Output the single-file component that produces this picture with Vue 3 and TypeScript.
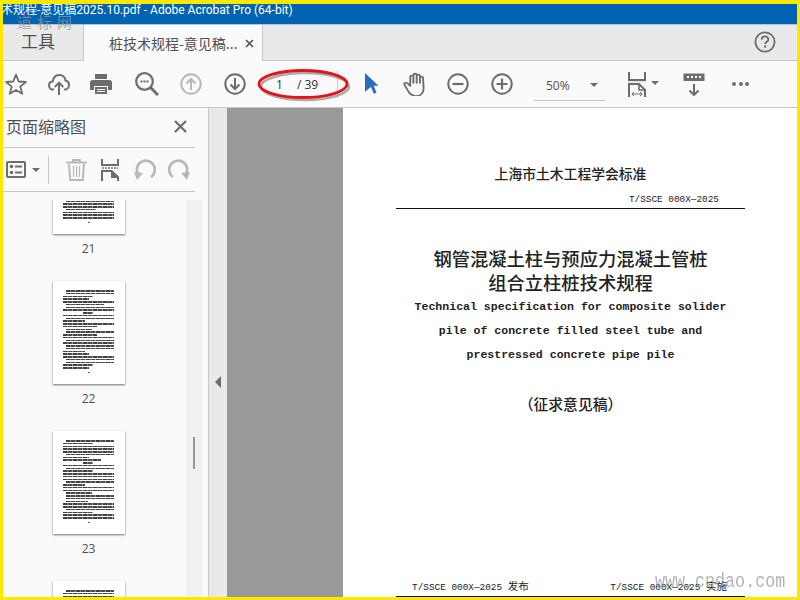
<script setup lang="ts">
interface Line { indent: number; width: number }

function makeLines(seed: number): Line[] {
  const out: Line[] = []
  let s = seed
  for (let i = 0; i < 29; i++) {
    s = (s * 37 + 11) % 101
    const indent = i % 5 === 0 ? 3 : i % 7 === 2 ? 0 : s % 3 === 0 ? 3 : 0
    const width = i === 8 ? 10 : s % 4 === 0 ? 22 + (s % 20) : 51 - indent
    out.push({ indent: i === 8 ? 20 : indent, width })
  }
  return out
}

const thumbs = [
  { n: 21, lines: makeLines(7) },
  { n: 22, lines: makeLines(23) },
  { n: 23, lines: makeLines(41) },
  { n: 24, lines: makeLines(59) },
]
</script>

<template>
  <div class="frame">
    <div class="titlebar"><span class="title-text">术规程-意见稿2025.10.pdf - Adobe Acrobat Pro (64-bit)</span></div>

    <div class="tabbar">
      <div class="tab-tools">工具</div>
      <div class="tab-doc">
        <span class="tab-name">桩技术规程-意见稿...</span>
        <svg class="tab-close" width="9" height="9" viewBox="0 0 9 9"><path d="M1 1l7 7M8 1L1 8" stroke="#555" stroke-width="1.7" /></svg>
      </div>
      <svg class="help" width="22" height="22" viewBox="0 0 22 22">
        <circle cx="11" cy="11" r="9.6" fill="none" stroke="#6d6d6d" stroke-width="1.8" />
        <path d="M7.8 8.6c0-4.2 6.6-4.2 6.6-.2 0 2.4-3.2 2.4-3.2 4.6" fill="none" stroke="#6d6d6d" stroke-width="1.9" />
        <rect x="10.1" y="14.4" width="2.2" height="2.2" fill="#6d6d6d" />
      </svg>
    </div>

    <div class="toolbar">
      <svg class="t-star" width="22" height="23" viewBox="0 0 22 23"><path d="M11 1.6l2.7 6.9 7.2.5-5.6 4.6 1.9 7.2L11 17l-6.2 3.8 1.9-7.2L1.1 9l7.2-.5z" fill="none" stroke="#6d6d6d" stroke-width="1.8" stroke-linejoin="round" /></svg>
      <svg class="t-cloud" width="22" height="23" viewBox="0 0 22 23">
        <path d="M6 16.5H5C2.600 16.500 1 14.600 1 12.400c0-2.200 1.600-3.900 3.700-4C5.400 4.600 8 2 11.300 2c3.200 0 5.800 2.300 6.200 5.400 2 .4 3.500 2.300 3.500 4.500 0 2.600-2 4.600-4.500 4.600H16" fill="none" stroke="#6d6d6d" stroke-width="2" />
        <path d="M11 22V10M6.800 14l4.200-4.400 4.200 4.400" fill="none" stroke="#6d6d6d" stroke-width="2" />
      </svg>
      <svg class="t-print" width="22" height="22" viewBox="0 0 22 22">
        <path d="M5 1h12v5H5z" fill="#6d6d6d" />
        <path d="M2.500 7h17C20.900 7 22 8.100 22 9.500V17h-4v-4H4v4H0V9.500C0 8.100 1.100 7 2.500 7z" fill="#6d6d6d" />
        <path d="M5 14h12v7H5z" fill="#6d6d6d" />
        <path d="M7 16h8v1H7zM7 18h8v1H7z" fill="#fafafa" />
      </svg>
      <svg class="t-search" width="24" height="24" viewBox="0 0 24 24">
        <circle cx="9.500" cy="9.500" r="8.300" fill="none" stroke="#6d6d6d" stroke-width="2.200" />
        <path d="M15.500 15.500L23 23" stroke="#6d6d6d" stroke-width="3" />
        <path d="M5.500 8.500h2v2h-2zM8.500 8.500h2v2h-2zM11.500 8.500h2v2h-2z" fill="#6d6d6d" />
      </svg>
      <svg class="t-up" width="22" height="22" viewBox="0 0 22 22">
        <circle cx="11" cy="11" r="9.700" fill="none" stroke="#b8b8b8" stroke-width="2" />
        <path d="M11 17V6M6.500 10.500L11 6l4.500 4.500" fill="none" stroke="#b8b8b8" stroke-width="2" />
      </svg>
      <svg class="t-down" width="22" height="22" viewBox="0 0 22 22">
        <circle cx="11" cy="11" r="9.700" fill="none" stroke="#6d6d6d" stroke-width="2" />
        <path d="M11 5v11M6.500 11.500L11 16l4.500-4.500" fill="none" stroke="#6d6d6d" stroke-width="2" />
      </svg>
      <div class="pager"><span class="pg-cur">1</span><span class="pg-total">/ 39</span></div>
      <div class="sep"></div>
      <svg class="t-cursor" width="14" height="22" viewBox="0 0 14 22"><path d="M0 0l13.500 12.700H8.600l3 6.800-2.800 1.300-2.900-6.900L0 18.800z" fill="#2a6fbb" /></svg>
      <svg class="t-hand" width="23" height="24" viewBox="0 0 19 24" preserveAspectRatio="none">
        <path d="M6 14V5c0-1.800 2.600-1.800 2.600 0v6-8c0-1.800 2.700-1.800 2.700 0v8-7c0-1.800 2.700-1.800 2.700 0v7-5c0-1.800 2.600-1.800 2.600 0 0 3 .4 8 .4 10 0 5-2.500 8-6 8-2.800 0-4.500-1-6-3.500L1.300 13c-1-1.700 1.200-3 2.400-1.700z" fill="none" stroke="#6d6d6d" stroke-width="1.600" stroke-linejoin="round" />
      </svg>
      <svg class="t-minus" width="22" height="22" viewBox="0 0 22 22">
        <circle cx="11" cy="11" r="9.700" fill="none" stroke="#6d6d6d" stroke-width="2" />
        <path d="M5.500 11h11" stroke="#6d6d6d" stroke-width="2.200" />
      </svg>
      <svg class="t-plus" width="22" height="22" viewBox="0 0 22 22">
        <circle cx="11" cy="11" r="9.700" fill="none" stroke="#6d6d6d" stroke-width="2" />
        <path d="M5.500 11h11M11 5.500v11" stroke="#6d6d6d" stroke-width="2.200" />
      </svg>
      <div class="zoombox">
        <span class="zoom-val">50%</span>
        <span class="caret"></span>
      </div>
      <svg class="t-fit" width="18" height="25" viewBox="0 0 18 25">
        <path d="M1 0v8h16V0" fill="none" stroke="#6d6d6d" stroke-width="2" />
        <path d="M0 9h18v1.500H0z" fill="#e4e4e4" />
        <path d="M1 25V12h10l6 6v7" fill="none" stroke="#6d6d6d" stroke-width="2" />
        <path d="M11 12v6h6" fill="none" stroke="#6d6d6d" stroke-width="1.600" />
        <path d="M4 22h10M6 20l-2.200 2L6 24M12 20l2.200 2-2.200 2" fill="none" stroke="#6d6d6d" stroke-width="1" />
      </svg>
      <span class="caret caret-fit"></span>
      <svg class="t-measure" width="22" height="23" viewBox="0 0 22 23">
        <rect x="0.500" y="0.500" width="21" height="7.500" fill="#6d6d6d" />
        <path d="M4 3h2v2H4zM8 3h2v2H8zM12 3h2v2h-2zM16 3h2v2h-2z" fill="#fafafa" />
        <path d="M11 11v11M6.500 17.500L11 22l4.500-4.500" fill="none" stroke="#6d6d6d" stroke-width="2" />
      </svg>
      <div class="dots"><i></i><i></i><i></i></div>
    </div>

    <div class="main">
      <aside class="sidebar">
        <div class="side-head">
          <span class="side-title">页面缩略图</span>
          <svg width="13" height="13" viewBox="0 0 13 13"><path d="M1 1l11 11M12 1L1 12" stroke="#6d6d6d" stroke-width="2.200" /></svg>
        </div>
        <div class="side-tools">
          <svg class="s-list" width="20" height="17" viewBox="0 0 20 17">
            <rect x="1" y="1" width="18" height="15" rx="1" fill="none" stroke="#6d6d6d" stroke-width="2" />
            <circle cx="5.500" cy="5.500" r="1.800" fill="#6d6d6d" /><circle cx="5.500" cy="11.500" r="1.800" fill="#6d6d6d" />
            <path d="M9 5.500h7M9 11.500h7" stroke="#6d6d6d" stroke-width="1.800" />
          </svg>
          <span class="caret caret-list"></span>
          <div class="side-sep"></div>
          <svg class="s-trash" width="21" height="22" viewBox="0 0 21 22">
            <path d="M0 3.500h21M7 3V1h7v2" fill="none" stroke="#b8b8b8" stroke-width="1.800" />
            <path d="M3 5l1.200 16h12.600L18 5" fill="none" stroke="#b8b8b8" stroke-width="2" />
            <path d="M7.500 7v11M10.500 7v11M13.500 7v11" stroke="#b8b8b8" stroke-width="1.200" />
          </svg>
          <svg class="s-cut" width="18" height="22" viewBox="0 0 18 22">
            <path d="M1 0v6h16V0" fill="none" stroke="#6d6d6d" stroke-width="2" />
            <path d="M1 9h16" stroke="#6d6d6d" stroke-width="1.500" stroke-dasharray="2 1" />
            <path d="M1 22V12h9.500l6.500 6v4" fill="none" stroke="#6d6d6d" stroke-width="2" />
            <path d="M10 12l7 7h-7z" fill="#6d6d6d" />
          </svg>
          <svg class="s-undo" width="22" height="21" viewBox="0 0 22 21">
            <path d="M5 16.500A9 9 0 1 1 17 18" fill="none" stroke="#b8b8b8" stroke-width="2.600" />
            <path d="M0 13l9 1-6 7z" fill="#b8b8b8" />
          </svg>
          <svg class="s-redo" width="22" height="21" viewBox="0 0 22 21">
            <path d="M17 16.500A9 9 0 1 0 5 18" fill="none" stroke="#b8b8b8" stroke-width="2.600" />
            <path d="M22 13l-9 1 6 7z" fill="#b8b8b8" />
          </svg>
        </div>
        <div class="thumbs">
          <div class="thumb-list">
            <div v-for="t in thumbs" :key="t.n" class="thumb">
              <div class="sheet">
                <div
                  v-for="(l, i) in t.lines"
                  :key="i"
                  class="bar"
                  :style="{ marginLeft: l.indent + 'px', width: l.width + 'px' }"
                ></div>
                <div class="folio"></div>
              </div>
              <div class="thumb-num">{{ t.n }}</div>
            </div>
          </div>
          <div class="track"><div class="track-thumb"></div></div>
        </div>
      </aside>

      <div class="handle"><span class="handle-arrow"></span></div>
      <div class="canvas"></div>

      <section class="page">
        <div class="org">上海市土木工程学会标准</div>
        <div class="code code-top">T/SSCE 000X—2025</div>
        <div class="rule"></div>
        <h1 class="cn-title">钢管混凝土柱与预应力混凝土管桩<br />组合立柱桩技术规程</h1>
        <p class="en-title">Technical specification for composite solider<br />pile of concrete filled steel tube and<br />prestressed concrete pipe pile</p>
        <div class="draft">（征求意见稿）</div>
        <div class="foot">
          <span class="code">T/SSCE 000X—2025 <span class="code-cn">发布</span></span>
          <span class="code">T/SSCE 000X—2025 <span class="code-cn">实施</span></span>
        </div>
        <div class="rule"></div>
      </section>
    </div>

    <svg class="ellipse" width="100" height="40" viewBox="0 0 100 40">
      <ellipse cx="51" cy="19.500" rx="44" ry="13.500" fill="none" stroke="#8a8a8a" stroke-width="2.500" opacity="0.7" />
      <ellipse cx="49" cy="17" rx="44" ry="13.500" fill="none" stroke="#e3141b" stroke-width="2.800" />
    </svg>
    <div class="wm-top"><span>道</span><span>标</span><span>网</span></div>
    <div class="wm-bottom">www.cndao.com</div>
  </div>
</template>

<style>
html, body { margin: 0; padding: 0; }
</style>

<style scoped>
.frame {
  position: relative;
  width: 800px;
  height: 600px;
  box-sizing: border-box;
  padding: 4px 3px 3px;
  background: #ffe800;
  display: flex;
  flex-direction: column;
  overflow: hidden;
  font-family: "Open Sans", "Noto Sans CJK SC", sans-serif;
}
.titlebar {
  height: 20px;
  flex: none;
  background: #0063b1;
  color: #fff;
  font-size: 12px;
  line-height: 11px;
  white-space: nowrap;
  overflow: hidden;
}
.title-text { margin-left: -2px; display: inline-block; font-family: Roboto, "Noto Sans CJK SC", sans-serif; }
.tabbar {
  height: 37px;
  flex: none;
  box-sizing: border-box;
  background: #e9e9e9;
  border-top: 1px solid #b8c4cc;
  border-bottom: 1px solid #c8c8c8;
  display: flex;
  align-items: stretch;
}
.tab-tools {
  width: 80px;
  padding-left: 18px;
  box-sizing: border-box;
  font-size: 17px;
  line-height: 32px;
  color: #505050;
  font-family: "Noto Sans CJK SC", sans-serif;
  letter-spacing: 0;
}
.tab-doc {
  width: 180px;
  box-sizing: border-box;
  margin-bottom: -1px;
  background: #fafafa;
  border-left: 1px solid #c8c8c8;
  border-right: 1px solid #c8c8c8;
  display: flex;
  align-items: center;
  padding-left: 25px;
}
.tab-name {
  font-size: 14px;
  color: #505050;
  font-family: "Noto Sans CJK SC", sans-serif;
  white-space: nowrap;
  width: 135px;
  margin-top: -1px;
}
.tab-close { margin-left: 1px; }
.help { margin: 6px 0 0 491px; }
.toolbar {
  height: 47px;
  flex: none;
  box-sizing: border-box;
  background: #fafafa;
  border-bottom: 1px solid #c8c8c8;
  display: flex;
  align-items: center;
}
.t-star { margin-left: 2px; }
.t-cloud { margin-left: 21px; }
.t-print { margin-left: 20px; }
.t-search { margin-left: 23px; }
.t-up { margin-left: 21px; }
.t-down { margin-left: 22px; }
.pager {
  width: 91px;
  height: 46px;
  box-sizing: border-box;
  display: flex;
  align-items: center;
  font-size: 12px;
  color: #333;
  padding-left: 30px;
  flex: none;
}
.pg-total { margin-left: 14px; }
.sep { width: 1px; height: 28px; background: #d0d0d0; flex: none; }
.t-cursor { margin-left: 27px; }
.t-hand { margin-left: 24px; }
.t-minus { margin-left: 21px; }
.t-plus { margin-left: 22px; }
.zoombox {
  width: 71px;
  height: 30px;
  margin: 3px 0 0 21px;
  box-sizing: border-box;
  border-bottom: 1px solid #c8c8c8;
  display: flex;
  align-items: center;
  font-size: 12px;
  color: #505050;
  padding-left: 12px;
}
.caret {
  display: inline-block;
  width: 0;
  height: 0;
  border-left: 4px solid transparent;
  border-right: 4px solid transparent;
  border-top: 4px solid #6d6d6d;
}
.zoombox .caret { margin-left: 20px; }
.t-fit { margin-left: 23px; }
.caret-fit { margin-left: 5px; margin-top: -2px; }
.t-measure { margin-left: 24px; }
.dots { margin-left: 27px; display: flex; gap: 2.500px; }
.dots i { width: 4px; height: 4px; border-radius: 50%; background: #6d6d6d; display: block; }
.main { flex: 1; min-height: 0; display: flex; }
.sidebar {
  width: 206px;
  flex: none;
  box-sizing: border-box;
  background: #fafafa;
  border-right: 1px solid #c8c8c8;
  display: flex;
  flex-direction: column;
  overflow: hidden;
}
.side-head {
  width: 192px;
  height: 40px;
  flex: none;
  box-sizing: border-box;
  border-bottom: 1px solid #c8c8c8;
  display: flex;
  align-items: center;
  padding-left: 3px;
  padding-bottom: 3px;
}
.side-title {
  font-size: 16px;
  color: #505050;
  font-family: "Noto Sans CJK SC", sans-serif;
  width: 168px;
}
.side-tools {
  width: 192px;
  height: 44px;
  flex: none;
  box-sizing: border-box;
  border-bottom: 1px solid #c8c8c8;
  display: flex;
  align-items: center;
}
.s-list { margin-left: 3px; }
.caret-list { margin-left: 6px; }
.side-sep { width: 1px; height: 28px; background: #c8c8c8; margin-left: 8px; flex: none; }
.s-trash { margin-left: 17px; }
.s-cut { margin-left: 14px; }
.s-undo { margin-left: 15px; }
.s-redo { margin-left: 12px; }
.thumbs {
  flex: 1;
  min-height: 0;
  margin-top: 8px;
  display: flex;
  overflow: hidden;
}
.thumb-list { width: 183px; flex: none; margin-top: -69px; }
.thumb { height: 150px; display: flex; flex-direction: column; align-items: center; }
.sheet {
  width: 72px;
  height: 103px;
  flex: none;
  box-sizing: border-box;
  margin-left: -12px;
  padding: 9px 0 0 10px;
  background: #fff;
  box-shadow: 0 1px 2px rgba(0, 0, 0, 0.55);
}
.bar {
  height: 1.500px;
  margin-bottom: 1.250px;
  background: repeating-linear-gradient(90deg, #000 0 4px, #555 4px 5px, #111 5px 9px, #777 9px 10px);
  opacity: 0.75;
  filter: blur(0.4px);
}
.folio { width: 2px; height: 1px; background: #666; margin: 3px 0 0 25px; }
.thumb-num {
  margin: 7px 0 0 -12px;
  font-size: 12px;
  line-height: 16px;
  color: #505050;
}
.track { width: 16px; flex: none; background: #f0f0f0; position: relative; }
.track-thumb {
  width: 2px;
  height: 32px;
  margin: 237px 0 0 7px;
  background: #999;
}
.handle {
  width: 18px;
  flex: none;
  background: #e9e9e9;
  display: flex;
  align-items: center;
  justify-content: center;
  padding-top: 58px;
  box-sizing: border-box;
}
.handle-arrow {
  width: 0;
  height: 0;
  border-top: 6px solid transparent;
  border-bottom: 6px solid transparent;
  border-right: 6px solid #6d6d6d;
}
.canvas { width: 116px; flex: none; background: #999; }
.page {
  flex: 1;
  min-width: 0;
  background: #fff;
  box-sizing: border-box;
  padding: 0 52px 0 53px;
  display: flex;
  flex-direction: column;
  color: #222;
  font-family: "Liberation Mono", "Noto Sans CJK SC", monospace;
}
.org {
  margin-top: 55px;
  text-align: center;
  font-size: 13.800px;
  line-height: 20px;
  font-weight: 500;
  font-family: "Noto Sans CJK SC", serif;
  color: #222;
}
.code { font-size: 9.400px; line-height: 12px; font-family: "Liberation Mono", "Noto Sans CJK SC", monospace; color: #222; }
.code-cn { font-size: 10.500px; }
.code-top { margin-top: 11px; text-align: right; padding-right: 26px; }
.rule { height: 1px; background: #111; flex: none; margin-top: 2px; }
.cn-title {
  margin: 37px 0 0;
  font-size: 18.300px;
  line-height: 24px;
  font-weight: 500;
  text-align: center;
  font-family: "Noto Sans CJK SC", serif;
  color: #222;
}
.en-title {
  margin: 1px 0 0;
  font-size: 11.550px;
  line-height: 24px;
  font-weight: 700;
  text-align: center;
  color: #222;
  font-family: "Liberation Mono", monospace;
}
.draft {
  margin-top: 27px;
  text-align: center;
  font-size: 14.800px;
  line-height: 20px;
  font-weight: 500;
  font-family: "Noto Sans CJK SC", serif;
  color: #222;
}
.foot {
  margin-top: auto;
  display: flex;
  justify-content: space-between;
  padding: 0 18px 0 16px;
}
.ellipse { position: absolute; left: 254px; top: 67px; }
.wm-top {
  position: absolute;
  left: 17px;
  top: 13px;
  display: flex;
  gap: 5px;
  font-size: 15px;
  line-height: 18px;
  color: rgba(150, 150, 155, 0.75);
  font-family: "Noto Sans CJK SC", sans-serif;
}
.wm-bottom {
  position: absolute;
  left: 655px;
  top: 572px;
  font-size: 16.700px;
  line-height: 20px;
  color: rgba(140, 140, 140, 0.65);
  font-family: "Liberation Mono", monospace;
  transform: scaleY(1.250);
  transform-origin: left center;
}
</style>
